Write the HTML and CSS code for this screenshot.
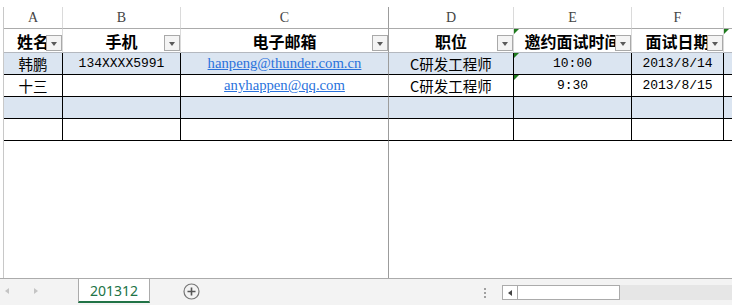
FILE: index.html
```html
<!DOCTYPE html>
<html lang="zh-CN">
<head>
    <meta charset="UTF-8">
    <title>201312</title>
    <link rel="stylesheet" href="styles.css">
</head>
<body>
    <div class="sheet">
        <div class="row colhead">
            <div class="gut"></div>
            <div class="cell">A</div>
            <div class="cell">B</div>
            <div class="cell freeze">C</div>
            <div class="cell">D</div>
            <div class="cell">E</div>
            <div class="cell">F</div>
            <div class="cell last"></div>
        </div>
        <div class="row hdr">
            <div class="gut"></div>
            <div class="cell">姓名<span class="filter"></span></div>
            <div class="cell">手机<span class="filter"></span></div>
            <div class="cell freeze">电子邮箱<span class="filter"></span></div>
            <div class="cell">职位<span class="filter"></span></div>
            <div class="cell mark">邀约面试时间<span class="filter"></span></div>
            <div class="cell">面试日期<span class="filter"></span></div>
            <div class="cell last mark"></div>
        </div>
        <div class="row dat blue">
            <div class="gut"></div>
            <div class="cell">韩鹏</div>
            <div class="cell num">134XXXX5991</div>
            <div class="cell freeze"><a class="link">hanpeng@thunder.com.cn</a></div>
            <div class="cell">C研发工程师</div>
            <div class="cell num mark">10:00</div>
            <div class="cell num">2013/8/14</div>
            <div class="cell last"></div>
        </div>
        <div class="row dat">
            <div class="gut"></div>
            <div class="cell">十三</div>
            <div class="cell num"></div>
            <div class="cell freeze"><a class="link">anyhappen@qq.com</a></div>
            <div class="cell">C研发工程师</div>
            <div class="cell num mark">9:30</div>
            <div class="cell num">2013/8/15</div>
            <div class="cell last"></div>
        </div>
        <div class="row dat blue">
            <div class="gut"></div>
            <div class="cell"></div>
            <div class="cell"></div>
            <div class="cell freeze"></div>
            <div class="cell"></div>
            <div class="cell"></div>
            <div class="cell"></div>
            <div class="cell last"></div>
        </div>
        <div class="row dat">
            <div class="gut"></div>
            <div class="cell"></div>
            <div class="cell"></div>
            <div class="cell freeze"></div>
            <div class="cell"></div>
            <div class="cell"></div>
            <div class="cell"></div>
            <div class="cell last"></div>
        </div>
        <div class="row rest">
            <div class="gut"></div>
            <div class="cell"></div>
            <div class="cell"></div>
            <div class="cell freeze"></div>
        </div>
    </div>
    <div class="tabbar">
        <div class="nav">
            <span class="arr prev"></span>
            <span class="arr next"></span>
        </div>
        <div class="tab">201312</div>
        <div class="add">
            <svg width="17" height="17" viewBox="0 0 17 17">
                <circle cx="8.5" cy="8.5" r="7.5" fill="none" stroke="#767676" stroke-width="1.2"/>
                <path d="M8.5 4.5v8M4.5 8.5h8" stroke="#555" stroke-width="1.6"/>
            </svg>
        </div>
        <div class="dots">
            <svg width="3" height="11" viewBox="0 0 3 11">
                <rect x="0" y="0" width="2" height="2" fill="#a0a0a0"/>
                <rect x="0" y="4" width="2" height="2" fill="#a0a0a0"/>
                <rect x="0" y="8" width="2" height="2" fill="#a0a0a0"/>
            </svg>
        </div>
        <div class="hscroll">
            <div class="thumb"><span class="sbtn"><span class="sarr"></span></span></div>
        </div>
    </div>
</body>
</html>
```

FILE: styles.css
```css
body {
    margin: 0;
    width: 732px;
    height: 305px;
    overflow: hidden;
    background: #fff;
    font-family: "Noto Sans CJK SC", sans-serif;
}
.sheet {
    height: 278px;
    padding-top: 7px;
    box-sizing: border-box;
    display: flex;
    flex-direction: column;
}
.row {
    display: grid;
    grid-template-columns: 4px 59px 118px 208px 125px 118px 92px 1fr;
}
.gut {
    border-right: 1px solid #c8c8c8;
}
.cell {
    position: relative;
    display: flex;
    align-items: center;
    justify-content: center;
    white-space: nowrap;
    overflow: hidden;
    box-sizing: border-box;
    color: #000;
}
.row > div {
    box-sizing: border-box;
}

/* column letters */
.colhead {
    height: 22px;
}
.colhead .cell {
    border-right: 1px solid #dadada;
    border-bottom: 1px solid #ababab;
    font-family: "Liberation Serif", serif;
    font-size: 14px;
    color: #444;
}

/* table header row */
.hdr {
    height: 24px;
}
.hdr .cell {
    border-right: 1px solid #dadada;
    border-bottom: 1px solid #b4b8bf;
    font-size: 16px;
    font-weight: 700;
    padding-top: 1px;
}
.filter {
    position: absolute;
    right: 0;
    bottom: 1px;
    width: 16px;
    height: 16px;
    box-sizing: border-box;
    border: 1px solid #a9a9a9;
    background: #f4f4f4;
}
.filter::after {
    content: "";
    position: absolute;
    left: 4px;
    top: 6px;
    border-top: 4px solid #5a5a5a;
    border-left: 3.5px solid transparent;
    border-right: 3.5px solid transparent;
}

/* data rows */
.dat {
    height: 22px;
}
.dat .cell {
    border-right: 1px solid #000;
    border-bottom: 1px solid #000;
    font-size: 14.5px;
}
.blue .cell {
    background: #dbe5f1;
}
.num {
    font-family: "Liberation Mono", "Noto Sans CJK SC", monospace;
}
.dat .num {
    font-size: 13px;
}
.link {
    font-family: "Liberation Serif", serif;
    font-size: 14.7px;
    color: #2a72dc;
    text-decoration: underline;
}

.row .freeze {
    border-right: 1px solid #9c9c9c;
}
.row .last {
    border-right: none;
}
.mark::before {
    content: "";
    position: absolute;
    top: 0;
    left: 0;
    border-top: 5px solid #1e7b1e;
    border-right: 5px solid transparent;
}

.rest {
    flex: 1;
}

/* sheet tabs */
.tabbar {
    height: 27px;
    box-sizing: border-box;
    border-top: 1px solid #ababab;
    background: #f3f3f3;
    display: flex;
    align-items: flex-start;
}
.tabbar svg {
    display: block;
}
.nav {
    width: 78px;
    height: 24px;
    display: flex;
    align-items: center;
    padding-left: 5px;
    box-sizing: border-box;
    gap: 25px;
}
.arr {
    width: 0;
    height: 0;
    border-top: 3.5px solid transparent;
    border-bottom: 3.5px solid transparent;
}
.prev {
    border-right: 4px solid #c4c4c4;
}
.next {
    border-left: 4px solid #c4c4c4;
}
.tab {
    width: 72px;
    height: 24px;
    box-sizing: border-box;
    background: #fff;
    border-left: 1px solid #ababab;
    border-right: 1px solid #ababab;
    border-bottom: 2px solid #217346;
    color: #217346;
    font-family: "Noto Sans", sans-serif;
    font-size: 14px;
    display: flex;
    align-items: center;
    justify-content: center;
}
.add {
    margin-left: 33px;
    margin-top: 4px;
    height: 17px;
}
.dots {
    margin-left: auto;
    margin-right: 15px;
    margin-top: 9px;
    height: 11px;
}
.hscroll {
    width: 230px;
    height: 15px;
    margin-top: 6px;
    background: #e6e6e6;
    display: flex;
}
.thumb {
    width: 118px;
    height: 15px;
    box-sizing: border-box;
    border: 1px solid #ababab;
    background: #fff;
    display: flex;
}
.sbtn {
    width: 15px;
    box-sizing: border-box;
    border-right: 1px solid #ababab;
    display: flex;
    align-items: center;
    justify-content: center;
}
.sarr {
    width: 0;
    height: 0;
    border-top: 3px solid transparent;
    border-bottom: 3px solid transparent;
    border-right: 4px solid #444;
}
```
